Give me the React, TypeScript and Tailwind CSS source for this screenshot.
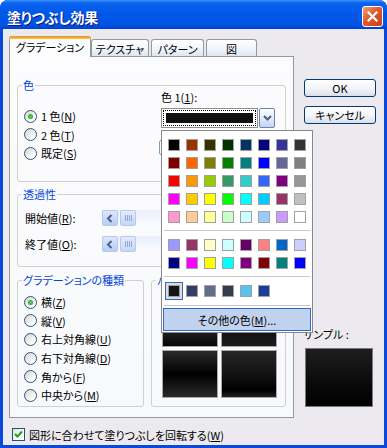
import React from 'react';

// Office 40-colour palette + chart colours shown in the open colour picker.
const MAIN = [
  ['#000000', '#993300', '#333300', '#003300', '#003366', '#000080', '#333399', '#333333'],
  ['#800000', '#FF6600', '#808000', '#008000', '#008080', '#0000FF', '#666699', '#808080'],
  ['#FF0000', '#FF9900', '#99CC00', '#339966', '#33CCCC', '#3366FF', '#800080', '#969696'],
  ['#FF00FF', '#FFCC00', '#FFFF00', '#00FF00', '#00FFFF', '#00CCFF', '#993366', '#C0C0C0'],
  ['#FF99CC', '#FFCC99', '#FFFF99', '#CCFFCC', '#CCFFFF', '#99CCFF', '#CC99FF', '#FFFFFF'],
];
const CHART = [
  ['#9999FF', '#993366', '#FFFFCC', '#CCFFFF', '#660066', '#FF8080', '#0066CC', '#CCCCFF'],
  ['#000080', '#FF00FF', '#FFFF00', '#00FFFF', '#800080', '#800000', '#008080', '#0000FF'],
];
const RECENT = ['#141414', '#333D66', '#636C8A', '#373C4D', '#58C3EE', '#1A3D9C'];

function Key({ k }: { k: string }) {
  return (
    <>
      (<span className="underline">{k}</span>)
    </>
  );
}

function Radio({ checked, children }: { checked?: boolean; children: React.ReactNode }) {
  return (
    <div className="flex items-center h-[18.6px]">
      <span className="w-[13px] h-[13px] rounded-full border border-[#2C5481] bg-[linear-gradient(135deg,#D4D3CD,#FFFFFF_80%)] flex items-center justify-center shrink-0">
        {checked && <span className="w-[5px] h-[5px] rounded-full bg-[radial-gradient(circle,#5FD35F,#1C961C)]" />}
      </span>
      <span className="ml-[4px] whitespace-nowrap">{children}</span>
    </div>
  );
}

function Group({ label, className, children }: { label: string; className: string; children?: React.ReactNode }) {
  return (
    <fieldset className={`border border-[#D0D0CC] rounded-[3px] ${className}`}>
      <legend className="ml-[4px] px-[1px] leading-[15px] text-[#0046D5] whitespace-nowrap">{label}</legend>
      {children}
    </fieldset>
  );
}

function Slider() {
  return (
    <div className="flex items-center h-[16px] w-[170px] bg-[linear-gradient(to_bottom,#E9EFFB,#FBFCFF)]">
      <div className="w-[16px] h-[16px] rounded-[2px] border border-[#B4C8F0] bg-[linear-gradient(to_bottom,#DDE7FC,#B9CDF6)] flex items-center justify-center">
        <svg width="8" height="9" viewBox="0 0 8 9">
          <polyline points="5.5,1 2,4.5 5.5,8" fill="none" stroke="#4D6185" strokeWidth="2" />
        </svg>
      </div>
      <div className="ml-[2px] w-[16px] h-[16px] rounded-[2px] border border-[#B4C8F0] bg-[linear-gradient(to_bottom,#E4ECFC,#C6D6F8)] flex items-center justify-center gap-[1px]">
        <span className="w-px h-[6px] bg-[#8FA6D6]" />
        <span className="w-px h-[6px] bg-[#8FA6D6]" />
        <span className="w-px h-[6px] bg-[#8FA6D6]" />
        <span className="w-px h-[6px] bg-[#8FA6D6]" />
      </div>
    </div>
  );
}

function Swatch({ c }: { c: string }) {
  return <div className="w-[12px] h-[12px] border border-[#A0A0A0]" style={{ background: c }} />;
}

function XpButton({ children }: { children: React.ReactNode }) {
  return (
    <div className="h-[18px] w-[72px] rounded-[3px] border border-[#003C74] bg-[linear-gradient(to_bottom,#FFFFFF,#F3F4F8_55%,#D9DEE9)] flex items-center justify-center">
      {children}
    </div>
  );
}

function ColorPopup() {
  return (
    <div className="absolute left-[161px] top-[130px] w-[152px] h-[203px] bg-white border border-[#888888] flex flex-col pt-[8px]">
      <div className="ml-[6px] grid grid-cols-[repeat(8,12px)] gap-[6px]">
        {MAIN.flat().map((c, i) => (
          <Swatch key={i} c={c} />
        ))}
      </div>
      <div className="mt-[7px] mx-[2px] h-px bg-[#C8C8C8]" />
      <div className="mt-[8px] ml-[6px] grid grid-cols-[repeat(8,12px)] gap-[6px]">
        {CHART.flat().map((c, i) => (
          <Swatch key={i} c={c} />
        ))}
      </div>
      <div className="mt-[7px] mx-[2px] h-px bg-[#C8C8C8]" />
      <div className="mt-[8px] ml-[6px] grid grid-cols-[repeat(8,12px)] gap-[6px]">
        {RECENT.map((c, i) => (
          <div
            key={i}
            className={`w-[12px] h-[12px] border border-[#A0A0A0] ${
              i === 0 ? 'shadow-[0_0_0_2px_#DCDCDC,0_0_0_3px_#316AC5]' : ''
            }`}
            style={{ background: c }}
          />
        ))}
      </div>
      <div className="mt-[8px] mx-[2px] h-px bg-[#C8C8C8]" />
      <div className="mt-[2px] mx-[1px] h-[23px] bg-[#C1D2EE] border border-[#316AC5] flex items-center justify-center">
        その他の色<Key k="M" />...
      </div>
    </div>
  );
}

function Tab({ label, active, className }: { label: string; active?: boolean; className: string }) {
  if (active) {
    return (
      <div className={`relative z-10 h-[21px] bg-[#FCFCFE] border-x border-[#919B9C] rounded-t-[3px] flex flex-col ${className}`}>
        <div className="h-[3px] -mx-px rounded-t-[3px] bg-[linear-gradient(to_bottom,#E68B2C,#FFC73C)]" />
        <div className="flex-1 flex items-center justify-center pb-[2px]">{label}</div>
      </div>
    );
  }
  return (
    <div
      className={`self-end h-[18px] border-x border-t border-[#919B9C] rounded-t-[3px] bg-[linear-gradient(to_bottom,#FFFFFF,#F2F5FB_50%,#DCE4F2)] flex items-center justify-center ${className}`}
    >
      {label}
    </div>
  );
}

export default function App() {
  return (
    <div className="w-[387px] h-[448px] bg-white font-['Noto_Sans_CJK_JP',sans-serif] [font-feature-settings:'palt'] text-[11px] text-black leading-[14px]">
      <div className="relative w-full h-full rounded-t-[8px] bg-[#0A49DA] flex flex-col overflow-hidden">
        {/* title bar */}
        <div className="h-[29px] shrink-0 flex items-start justify-between bg-[linear-gradient(to_bottom,#3E92FF_0%,#0A64F0_10%,#0058E8_45%,#0054E3_85%,#0040D2_100%)]">
          <div className="ml-[7px] mt-[8px] text-[14px] leading-[18px] font-bold text-white [text-shadow:1px_1px_0_#0A1A80] tracking-[-0.2px]">
            塗りつぶし効果
          </div>
          <div className="mt-[6px] mr-[4px] w-[21px] h-[21px] rounded-[3px] border border-white bg-[linear-gradient(135deg,#F0A080,#E0582A_45%,#C8401C)] flex items-center justify-center">
            <svg width="11" height="11" viewBox="0 0 11 11">
              <path d="M1.5 1.5 L9.5 9.5 M9.5 1.5 L1.5 9.5" stroke="white" strokeWidth="2.2" strokeLinecap="square" />
            </svg>
          </div>
        </div>

        {/* client area */}
        <div className="flex-1 mx-[3px] mb-[3px] bg-[#ECEAEE] flex flex-col pt-[8px] pb-[2px]">
          <div className="flex pl-[6px] pr-[7px]">
            <div className="w-[285px] flex flex-col">
              <div className="flex h-[20px] items-end">
                <Tab label="グラデーション" active className="w-[82px]" />
                <Tab label="テクスチャ" className="w-[58px]" />
                <Tab label="パターン" className="ml-[2px] w-[53px]" />
                <Tab label="図" className="ml-[2px] w-[51px]" />
              </div>
              <div className="h-[362px] border border-[#919B9C] bg-[linear-gradient(to_bottom,#FCFCFE,#F8F9FC)] px-[7px] pt-[21px] flex flex-col -mt-px">
                {/* 色 */}
                <Group label="色" className="h-[104px] flex">
                  <div className="w-[143px] pl-[6px] pt-[14px]">
                    <Radio checked>
                      1 色<Key k="N" />
                    </Radio>
                    <Radio>
                      2 色<Key k="T" />
                    </Radio>
                    <Radio>
                      既定<Key k="S" />
                    </Radio>
                  </div>
                  <div className="-mt-[3px] flex flex-col">
                    <div className="h-[14px]">
                      色 1<Key k="1" />:
                    </div>
                    <div className="mt-[4px] flex h-[20px]">
                      <div className="w-[97px] h-[20px] border border-[#8E8E8E] bg-white p-px">
                        <div className="w-full h-full border border-dotted border-black p-[2px]">
                          <div className="w-full h-full bg-[#111111]" />
                        </div>
                      </div>
                      <div className="ml-px w-[16px] h-[20px] rounded-[2px] border border-[#6D83B5] bg-[linear-gradient(to_bottom,#FFFFFF,#E5ECFB_50%,#C3D3F5)] flex items-center justify-center">
                        <svg width="9" height="6" viewBox="0 0 9 6">
                          <polyline points="1,1 4.5,4.5 8,1" fill="none" stroke="#4D6185" strokeWidth="2" />
                        </svg>
                      </div>
                    </div>
                    <div className="mt-[12px] -ml-[2px] w-[100px] h-[15px] rounded-[2px] border border-[#7F9DB9]" />
                  </div>
                </Group>

                {/* 透過性 */}
                <Group label="透過性" className="mt-[5px] h-[80px]">
                  <div className="pl-[7px] pt-[8px] flex flex-col gap-[10px]">
                    <div className="flex items-center h-[16px]">
                      <div className="w-[77px]">
                        開始値<Key k="R" />:
                      </div>
                      <Slider />
                    </div>
                    <div className="flex items-center h-[16px]">
                      <div className="w-[77px]">
                        終了値<Key k="O" />:
                      </div>
                      <Slider />
                    </div>
                  </div>
                </Group>

                <div className="mt-[6px] flex gap-[7px]">
                  <Group label="グラデーションの種類" className="w-[127px] h-[134px]">
                    <div className="pl-[6px] pt-[5px]">
                      <Radio checked>
                        横<Key k="Z" />
                      </Radio>
                      <Radio>
                        縦<Key k="V" />
                      </Radio>
                      <Radio>
                        右上対角線<Key k="U" />
                      </Radio>
                      <Radio>
                        右下対角線<Key k="D" />
                      </Radio>
                      <Radio>
                        角から<Key k="F" />
                      </Radio>
                      <Radio>
                        中央から<Key k="M" />
                      </Radio>
                    </div>
                  </Group>
                  <Group label="バリエーション" className="w-[135px] h-[134px]">
                    <div className="pl-[10px] pt-[13px] grid grid-cols-[56px_56px] grid-rows-[46px_48px] gap-[3px]">
                      <div className="border border-[#A8A8A8] bg-[linear-gradient(to_bottom,#000000,#2A2A2A_55%,#050505)]" />
                      <div className="border border-[#A8A8A8] bg-[linear-gradient(to_bottom,#000000,#1C1C1C)]" />
                      <div className="border border-[#A8A8A8] bg-[linear-gradient(to_bottom,#2A2A2A,#000000_50%,#2A2A2A)]" />
                      <div className="border border-[#A8A8A8] bg-[linear-gradient(to_bottom,#262626,#101010_55%,#000000_85%,#222222)]" />
                    </div>
                  </Group>
                </div>
              </div>
            </div>

            {/* right column */}
            <div className="ml-[10px] w-[72px] flex flex-col pb-[11px]">
              <div className="mt-[42px]">
                <XpButton>OK</XpButton>
              </div>
              <div className="mt-[9px]">
                <XpButton>キャンセル</XpButton>
              </div>
              <div className="flex-1" />
              <div className="-ml-[1px] h-[14px]">サンプル :</div>
              <div className="mt-[7px] ml-px w-[68px] h-[59px] border border-[#7A7A7A] bg-[linear-gradient(to_bottom,#1E1E1E,#0A0A0A_60%,#000000)]" />
            </div>
          </div>

          <div className="mt-[10px] ml-[9px] flex items-center h-[13px]">
            <span className="w-[13px] h-[13px] border border-[#1C5180] bg-[linear-gradient(135deg,#E0E0DA,#FFFFFF_80%)] flex items-center justify-center">
              <svg width="9" height="9" viewBox="0 0 9 9">
                <polyline points="1,4 3.5,6.5 8,1.5" fill="none" stroke="#21A121" strokeWidth="2" />
              </svg>
            </span>
            <span className="ml-[4px]">
              図形に合わせて塗りつぶしを回転する<Key k="W" />
            </span>
          </div>
        </div>

        <ColorPopup />
      </div>
    </div>
  );
}
